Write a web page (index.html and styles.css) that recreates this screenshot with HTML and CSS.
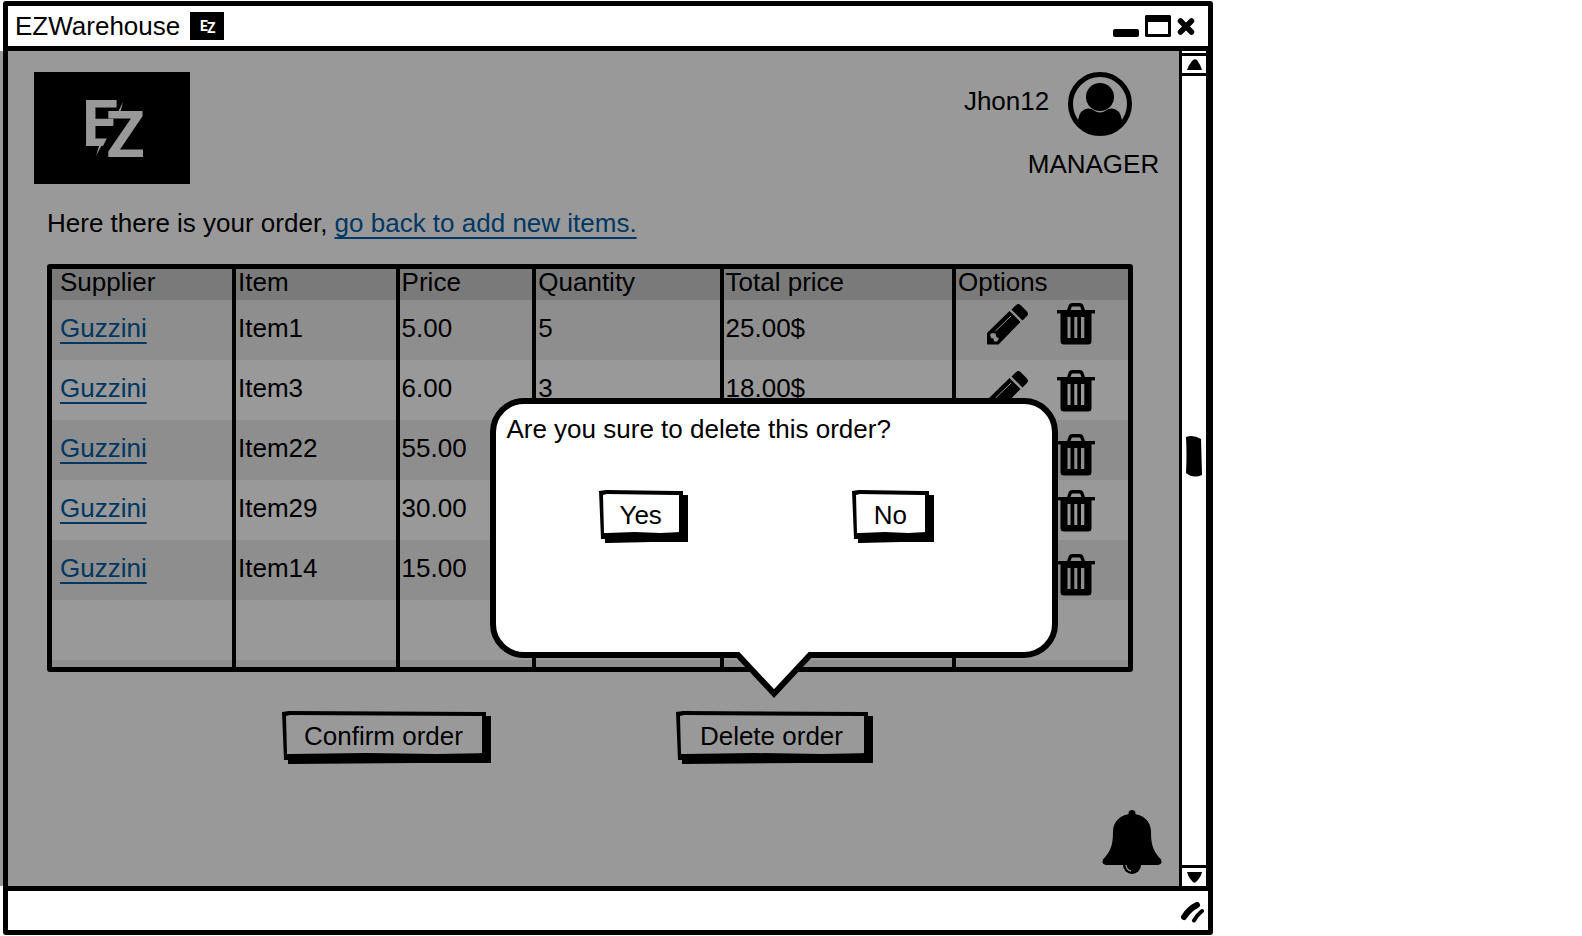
FILE: index.html
```
<!DOCTYPE html>
<html lang="en">
<head>
<meta charset="utf-8">
<title>EZWarehouse</title>
<link rel="stylesheet" href="styles.css">
</head>
<body>
<svg class="defs" aria-hidden="true">
  <symbol id="trash" viewBox="0 0 38 42">
    <path d="M11.500 8 L13 3.500 Q13.500 1.800 15.500 1.800 H22.500 Q24.500 1.800 25 3.500 L26.500 8" fill="none" stroke="#000" stroke-width="3.400"/>
    <rect x="0" y="7" width="38" height="3.400"/>
    <path fill-rule="evenodd" d="M3.500 10 H34.500 V38 Q34.500 41.500 31 41.500 H7 Q3.500 41.500 3.500 38 Z M10.500 14 V35 H13.500 V14 Z M17.300 14 V35 H20.300 V14 Z M24 14 V35 H27.300 V14 Z"/>
  </symbol>
  <symbol id="pencil" viewBox="0 0 41 41">
    <path fill-rule="evenodd" d="M0 29 L22.500 7 L33.500 18 L11.500 40.500 H0 Z M5 29 L3 30.500 L4 34 L6.500 34.500 L7 37.500 L10 37.500 L12 34.500 L9.500 33 L8.500 29.500 Z"/>
    <path d="M8.500 27 L24 12" stroke="#999" stroke-width="1" fill="none"/>
    <path d="M24.500 5.500 L28 2 Q31 -1.500 34 1.500 L39.500 7 Q42.500 10 39.500 12.500 L35.500 16.500 Z"/>
  </symbol>
</svg>

<div class="window">
  <header class="titlebar">
    <h1 class="title">EZWarehouse</h1>
    <svg class="favicon" viewBox="0 0 34 28" role="img" aria-label="EZ logo">
      <rect width="34" height="28"/>
      <text class="favicon-letters" x="10" y="19">E</text>
      <text class="favicon-letters" x="17" y="21">Z</text>
    </svg>
    <div class="window-controls">
      <button class="icon-button" aria-label="Minimize"><svg width="26" height="22"><rect y="14" width="26" height="8" rx="2"/></svg></button>
      <button class="icon-button" aria-label="Maximize"><svg width="26" height="22"><path fill-rule="evenodd" d="M1 0 H25 L26 1 V21 L25 22 H1 L0 21 V1 Z M3 7 V19 H23 V7 Z"/></svg></button>
      <button class="icon-button" aria-label="Close"><svg width="18" height="22"><path d="M3.500 6 L14.500 17 M14.500 6 L3.500 17" stroke="#000" stroke-width="5.500" stroke-linecap="round"/></svg></button>
    </div>
  </header>

  <div class="viewport">
    <main class="content">
      <div class="page-header">
        <svg class="logo" viewBox="0 0 156 112" role="img" aria-label="EZ logo">
          <rect width="156" height="112"/>
          <text class="logo-letters" x="48" y="74">E</text>
          <path d="M93 26 L60 92 L80 92 L96 40 Z"/>
          <text class="logo-letters" x="72" y="85">Z</text>
          <path class="logo-bolt" d="M62 84 L71 67 L65 74 Z M89 30 L81 46 L87 38 Z"/>
        </svg>
        <div class="user">
          <div class="user-name">
            <span class="name">Jhon12</span>
            <svg class="avatar" viewBox="0 0 64 64" role="img" aria-label="User">
              <circle cx="32" cy="32" r="29.500" fill="none" stroke="#000" stroke-width="5"/>
              <circle cx="32" cy="25" r="14"/>
              <path d="M10 48 Q12 37 20 36.500 Q24 36.500 26 38.500 Q32 42.500 38 38.500 Q40 36.500 44 36.500 Q52 37 54 48 L55 52 A30 30 0 0 1 9 52 Z"/>
            </svg>
          </div>
          <span>MANAGER</span>
        </div>
      </div>

      <p class="intro">Here there is your order, <a href="#items">go back to add new items.</a></p>

      <table class="order">
        <colgroup>
          <col class="col-supplier"><col class="col-item"><col class="col-price"><col class="col-quantity"><col class="col-total"><col class="col-options">
        </colgroup>
        <thead>
          <tr><th>Supplier</th><th>Item</th><th>Price</th><th>Quantity</th><th>Total price</th><th>Options</th></tr>
        </thead>
        <tbody>
          <tr><td><a href="#guzzini">Guzzini</a></td><td>Item1</td><td>5.00</td><td>5</td><td>25.00$</td>
            <td class="options options-high"><div class="actions"><button class="icon-button" aria-label="Edit"><svg class="pencil"><use href="#pencil"/></svg></button><button class="icon-button" aria-label="Delete"><svg class="trash"><use href="#trash"/></svg></button></div></td></tr>
          <tr><td><a href="#guzzini">Guzzini</a></td><td>Item3</td><td>6.00</td><td>3</td><td>18.00$</td>
            <td class="options"><div class="actions"><button class="icon-button" aria-label="Edit"><svg class="pencil"><use href="#pencil"/></svg></button><button class="icon-button" aria-label="Delete"><svg class="trash"><use href="#trash"/></svg></button></div></td></tr>
          <tr><td><a href="#guzzini">Guzzini</a></td><td>Item22</td><td>55.00</td><td></td><td></td>
            <td class="options options-low"><div class="actions"><button class="icon-button" aria-label="Edit"><svg class="pencil"><use href="#pencil"/></svg></button><button class="icon-button" aria-label="Delete"><svg class="trash"><use href="#trash"/></svg></button></div></td></tr>
          <tr><td><a href="#guzzini">Guzzini</a></td><td>Item29</td><td>30.00</td><td></td><td></td>
            <td class="options"><div class="actions"><button class="icon-button" aria-label="Edit"><svg class="pencil"><use href="#pencil"/></svg></button><button class="icon-button" aria-label="Delete"><svg class="trash"><use href="#trash"/></svg></button></div></td></tr>
          <tr><td><a href="#guzzini">Guzzini</a></td><td>Item14</td><td>15.00</td><td></td><td></td>
            <td class="options options-low"><div class="actions"><button class="icon-button" aria-label="Edit"><svg class="pencil"><use href="#pencil"/></svg></button><button class="icon-button" aria-label="Delete"><svg class="trash"><use href="#trash"/></svg></button></div></td></tr>
          <tr><td></td><td></td><td></td><td></td><td></td><td></td></tr>
          <tr class="stub"><td></td><td></td><td></td><td></td><td></td><td></td></tr>
        </tbody>
      </table>

      <div class="order-actions">
        <button class="sketch-button wide">Confirm order</button>
        <div class="popover-anchor">
          <button class="sketch-button wide">Delete order</button>
          <dialog class="popover" open aria-labelledby="question">
            <p class="question" id="question">Are you sure to delete this order?</p>
            <div class="answers">
              <button class="sketch-button">Yes</button>
              <button class="sketch-button">No</button>
            </div>
            <svg class="tail" width="76" height="46" viewBox="0 0 76 46" aria-hidden="true">
              <path d="M0 0 H76 V3 L38 42 L0 3 Z" fill="#fff"/>
              <path d="M0 3 H2 L38 41.500 L74 3 H76" fill="none" stroke="#000" stroke-width="6"/>
            </svg>
          </dialog>
        </div>
      </div>

      <button class="icon-button bell" aria-label="Notifications">
        <svg width="60" height="64" viewBox="0 0 60 64">
          <circle cx="30" cy="3.500" r="3.500"/>
          <path d="M30 4 C19 4 11 11 11 22 C11 36 8 42 1 49.500 Q-1 54 4 55 H56 Q61 54 59 49.500 C52 42 49 36 49 22 C49 11 41 4 30 4 Z"/>
          <circle cx="30" cy="55" r="9"/>
          <path d="M24 55 Q24.500 60 29 61" fill="none" stroke="#999" stroke-width="1.300"/>
        </svg>
      </button>
    </main>

    <div class="scrollbar">
      <button class="scroll-button scroll-up" aria-label="Scroll up"><svg width="15" height="11"><path d="M0 11 Q1 7 5 2 Q7 -1 10 1 Q13 5 15 11 Z"/></svg></button>
      <div class="track">
        <svg class="thumb" width="16" height="42" aria-hidden="true"><path d="M0 2 Q7 -1 15 4 L16 40 Q7 44 0 38 Q1 20 0 2 Z"/></svg>
      </div>
      <button class="scroll-button scroll-down" aria-label="Scroll down"><svg width="15" height="11"><path d="M0 0 H15 Q14 5 9 10 Q7 12 5 9 Q1 5 0 0 Z"/></svg></button>
    </div>
  </div>

  <footer class="statusbar">
    <svg width="23" height="22" viewBox="0 0 23 22" fill="none" stroke="#000" stroke-linecap="round" aria-hidden="true"><path d="M3 15 Q8 7 16 3" stroke-width="6"/><path d="M13 18.500 Q16 13 21 9" stroke-width="4"/></svg>
  </footer>
</div>
</body>
</html>
```
FILE: styles.css
```
* {
  box-sizing: border-box;
}

body {
  margin: 0;
  background: #fff;
  color: #000;
  font: 26px/32px "Liberation Sans", Arial, sans-serif;
}

.defs {
  position: absolute;
  width: 0;
  height: 0;
}

a {
  color: #003763;
  text-decoration-thickness: 2px;
  text-underline-offset: 5px;
}

svg {
  display: block;
}

.window {
  display: flex;
  flex-direction: column;
  width: 76.5%;
  min-height: calc(100vh - 2px);
  margin: 1px 0 1px 3px;
  border: 5px solid #000;
  border-radius: 3px;
}

.titlebar {
  display: flex;
  align-items: center;
  height: 40px;
  padding: 0 13px 0 7px;
  background: #fff;
}

.title {
  margin: 0;
  font-size: 26px;
  font-weight: normal;
}

.favicon {
  width: 34px;
  height: 28px;
  margin-left: 10px;
}

.logo-letters {
  fill: #999;
  font: bold 64px Roboto, sans-serif;
}

.logo-bolt {
  fill: #999;
}

.favicon-letters {
  fill: #fff;
  font: bold 14px Roboto, sans-serif;
}

.window-controls {
  display: flex;
  gap: 6px;
  margin-left: auto;
}

.icon-button {
  padding: 0;
  border: 0;
  background: none;
}

.viewport {
  display: flex;
  flex: 1;
  border-top: 5px solid #000;
  border-bottom: 5px solid #000;
}

.content {
  position: relative;
  display: flex;
  flex: 1;
  flex-direction: column;
  padding: 21px 0 12px;
}

.content::before {
  content: "";
  position: absolute;
  inset: 0 0 0 -8px;
  z-index: -1;
  background: #999;
}

.page-header {
  display: flex;
  justify-content: space-between;
  padding: 0 20px 0 26px;
}

.logo {
  width: 156px;
  height: 112px;
}

.user {
  display: flex;
  flex-direction: column;
  align-items: flex-end;
  gap: 12px;
}

.user-name {
  display: flex;
  align-items: center;
  gap: 19px;
  padding-right: 27px;
}

.name {
  padding-bottom: 6px;
}

.avatar {
  width: 64px;
  height: 64px;
}

.intro {
  margin: 23px 39px 25px;
}

.order {
  width: calc(100% - 85px);
  margin-left: 39px;
  table-layout: fixed;
  border: 5px solid #000;
  border-radius: 3px;
  border-spacing: 0;
}

.col-supplier { width: 17.1%; }
.col-item { width: 15.2%; }
.col-price { width: 12.7%; }
.col-quantity { width: 17.4%; }
.col-total { width: 21.6%; }
.col-options { width: 16%; }

.order th,
.order td {
  height: 60px;
  padding: 0 2px;
  border-right: 4px solid #000;
  text-align: left;
  font-weight: normal;
  vertical-align: middle;
}

.order th {
  height: 31px;
  padding-bottom: 4px;
  line-height: 27px;
  background: #7a7a7a;
}

.order td {
  padding-bottom: 5px;
}

.order th:first-child,
.order td:first-child {
  padding-left: 8px;
}

.order th:last-child,
.order td:last-child {
  border-right: 0;
}

.order tbody tr:nth-child(odd) {
  background: #8e8e8e;
}

.order .stub td {
  height: 7px;
  padding: 0;
}

.order .options {
  padding: 10px 0 0 31px;
  vertical-align: top;
}

.order .options-high {
  padding-top: 3px;
}

.order .options-low {
  padding-top: 14px;
}

.actions {
  display: flex;
  gap: 29px;
}

.pencil {
  width: 41px;
  height: 41px;
}

.trash {
  width: 38px;
  height: 42px;
}

.order-actions {
  display: flex;
  gap: 185px;
  margin: 39px 0 0 274px;
}

/* Hand-drawn frame with a drop edge on the right and bottom. */
.sketch-button {
  min-width: 82px;
  height: 53px;
  padding: 3px 14px 0 12px;
  border-style: solid;
  border-color: #000;
  border-width: 8px 12px 14px 8px;
  border-image: url("data:image/svg+xml,%3Csvg xmlns='http://www.w3.org/2000/svg' width='100' height='53'%3E%3Cpath fill-rule='evenodd' d='M0 1 L7 0 L95 1 V5 H100 V52 L60 52 L6 53 V49 H2 Z M4 5 L8 4 L91 5 V42 L70 43 L40 42 L5 43 Z'/%3E%3C/svg%3E") 8 12 14 8;
  background: none;
  color: #000;
  font: inherit;
  line-height: 28px;
}

.wide {
  min-width: 197px;
  padding: 3px 16px 0 14px;
}

.popover-anchor {
  position: relative;
}

.popover {
  position: absolute;
  inset: auto auto calc(100% + 53px) 50%;
  width: 568px;
  height: 260px;
  margin: 0;
  padding: 9px 10px;
  border: 6px solid #000;
  border-radius: 34px;
  background: #fff;
  color: #000;
  overflow: visible;
  transform: translateX(-50%);
}

.question {
  margin: 0 0 45px;
}

.answers {
  display: flex;
  justify-content: space-between;
  padding: 0 108px 0 93px;
}

.tail {
  position: absolute;
  top: 100%;
  left: 50%;
  margin-left: -38px;
}

.bell {
  align-self: flex-end;
  margin: auto 17px 0 0;
}

.scrollbar {
  display: flex;
  flex-direction: column;
  width: 29px;
  border: solid #000;
  border-width: 0 2px 0 3px;
  background: #fff;
}

.scroll-button {
  display: flex;
  align-items: center;
  justify-content: center;
  height: 21px;
  padding: 0;
  border: 0 solid #000;
  background: #fff;
}

.scroll-up {
  height: 23px;
  margin-top: 2px;
  border-width: 3px 0;
  border-radius: 0;
}

.scroll-down {
  border-top-width: 3px;
}

.track {
  display: flex;
  flex: 1;
  flex-direction: column;
  align-items: center;
}

.track::before {
  content: "";
  flex: 12;
}

.track::after {
  content: "";
  flex: 13;
}

.statusbar {
  display: flex;
  align-items: center;
  justify-content: flex-end;
  height: 39px;
  padding: 4px 4px 0 0;
  background: #fff;
}
```
